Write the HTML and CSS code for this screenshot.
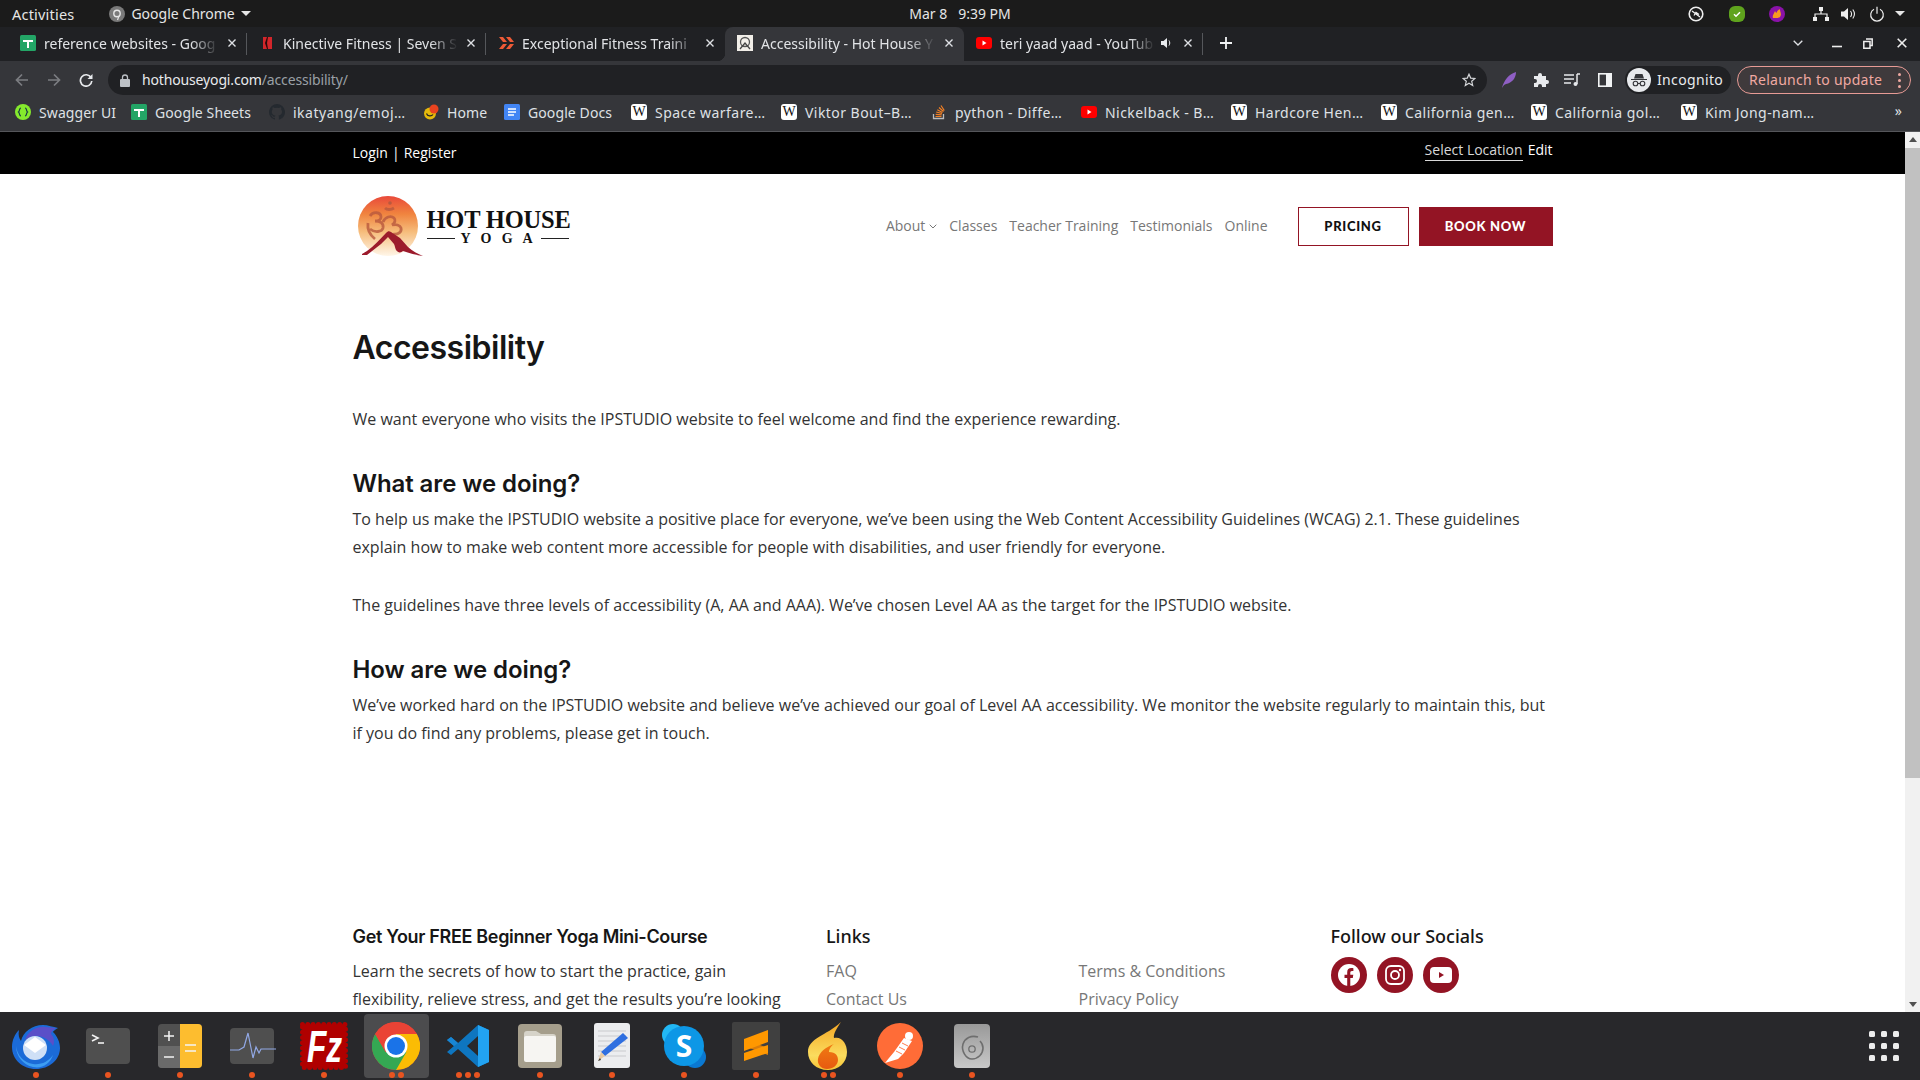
FILE: index.html
```html
<!DOCTYPE html>
<html lang="en">
<head>
<meta charset="utf-8">
<title>Accessibility - Hot House Yoga</title>
<link rel="stylesheet" href="styles.css">
</head>
<body>
<div class="screen">
  <svg class="sprite" width="0" height="0" aria-hidden="true">
    <symbol id="sheets" viewBox="0 0 16 16"><rect width="16" height="16" rx="1.5" fill="#23a566"/><path d="M3 5h10v2H9v6H7V7H3z" fill="#fff"/></symbol>
    <symbol id="yt" viewBox="0 0 16 16"><rect y="2" width="16" height="12" rx="3" fill="#f00"/><path d="M6.5 5.5l4 2.5-4 2.5z" fill="#fff"/></symbol>
    <symbol id="x" viewBox="0 0 10 10"><path d="M1.5 1.5l7 7M8.5 1.5l-7 7" stroke="#dfe1e5" stroke-width="1.4" fill="none"/></symbol>
  </svg>

  <div class="topbar">
    <div class="top-left">
      <span>Activities</span>
      <span class="app-menu">
        <svg width="16" height="16" viewBox="0 0 16 16"><circle cx="8" cy="8" r="8" fill="#7a7a7a"/><circle cx="8" cy="7.5" r="3.2" fill="none" stroke="#e6e6e6" stroke-width="1.4"/><path d="M10 10l-1.5 4" stroke="#e6e6e6" stroke-width="1.2"/></svg>
        Google Chrome <i class="caret"></i>
      </span>
    </div>
    <div class="top-clock">Mar 8&nbsp;&nbsp;&nbsp;9:39 PM</div>
    <div class="top-right">
      <svg class="tray-a" width="16" height="16" viewBox="0 0 16 16"><circle cx="8" cy="8" r="6.8" fill="none" stroke="#eee" stroke-width="1.6"/><path d="M4 5l8 6M6 9.500l2-3 3 2" fill="none" stroke="#eee" stroke-width="1.3"/></svg>
      <svg class="tray-b" width="16" height="16" viewBox="0 0 16 16"><rect width="16" height="16" rx="6" fill="#5fa31d"/><path d="M5 8.200l2 2 4-4" fill="none" stroke="#fff" stroke-width="1.5"/></svg>
      <svg class="tray-c" width="16" height="16" viewBox="0 0 16 16"><circle cx="8" cy="8" r="8" fill="#8a12a8"/><path d="M4 12c-1-3 1-4 2-7 .5 1 1 1.500 1.300 2 .5-1.500 1.700-3 3.700-4-.4 2 1.500 4 .7 6.500-.5 1.500-1.500 2.500-3 2.500H5z" fill="#f79a1f"/></svg>
      <svg class="tray-d" width="16" height="16" viewBox="0 0 16 16"><path d="M6 1h4v4H6zM0 11h4v4H0zM12 11h4v4h-4z" fill="#eee"/><path d="M8 5v3M2 11V8h12v3" fill="none" stroke="#eee" stroke-width="1.200"/></svg>
      <svg class="tray-e" width="16" height="16" viewBox="0 0 16 16"><path d="M1 5.500h3l4-3.500v12l-4-3.500H1z" fill="#eee"/><path d="M10.500 5c1.300 1.800 1.300 4.200 0 6M12.800 3.500c2 2.700 2 6.300 0 9" fill="none" stroke="#eee" stroke-width="1.100"/></svg>
      <svg class="tray-f" width="16" height="16" viewBox="0 0 16 16"><path d="M5 3.200a6.300 6.300 0 1 0 6 0M8 .8v7" fill="none" stroke="#eee" stroke-width="1.200"/></svg>
      <i class="caret caret-wide"></i>
    </div>
  </div>

  <div class="tabstrip">
    <div class="tab">
      <svg class="fav" width="16" height="16"><use href="#sheets"/></svg>
      <span class="tab-title">reference websites - Goog</span>
      <svg class="tab-x" width="10" height="10"><use href="#x"/></svg>
    </div>
    <div class="tab">
      <svg class="fav" width="16" height="16" viewBox="0 0 16 16"><rect x="4" y="2" width="9" height="12" fill="#d3262b"/><path d="M8 2L6 8l2 6h1L8 8l1-6z" fill="#2a0a0b"/></svg>
      <span class="tab-title">Kinective Fitness | Seven S</span>
      <svg class="tab-x" width="10" height="10"><use href="#x"/></svg>
    </div>
    <div class="tab">
      <svg class="fav" width="16" height="16" viewBox="0 0 16 16"><path d="M1 2h4l4 5H5zM1 14h4l4-5H5zM8 2h4l4 5h-4zM8 14h4l4-5h-4z" fill="#ee5a36"/></svg>
      <span class="tab-title">Exceptional Fitness Traini</span>
      <svg class="tab-x" width="10" height="10"><use href="#x"/></svg>
    </div>
    <div class="tab tab-active">
      <svg class="fav" width="16" height="16" viewBox="0 0 16 16"><rect width="16" height="16" fill="#f2efe9"/><circle cx="8" cy="7" r="4.500" fill="none" stroke="#555" stroke-width="1.300"/><path d="M3 14l5-6 5 6" fill="none" stroke="#444" stroke-width="1.300"/></svg>
      <span class="tab-title">Accessibility - Hot House Y</span>
      <svg class="tab-x" width="10" height="10"><use href="#x"/></svg>
    </div>
    <div class="tab tab-last">
      <svg class="fav" width="16" height="16"><use href="#yt"/></svg>
      <span class="tab-title">teri yaad yaad - YouTub</span>
      <svg class="tab-sound" width="12" height="12" viewBox="0 0 12 12"><path d="M0 4h2.500L6 1v10L2.500 8H0z" fill="#e8eaed"/><path d="M8 3.500c1 1.500 1 3.500 0 5" fill="none" stroke="#e8eaed"/></svg>
      <svg class="tab-x" width="10" height="10"><use href="#x"/></svg>
    </div>
    <svg class="tab-plus" width="12" height="12" viewBox="0 0 12 12"><path d="M6 0v12M0 6h12" stroke="#f1f3f4" stroke-width="1.800"/></svg>
    <div class="win-controls">
      <svg class="win-chev" width="10" height="6" viewBox="0 0 10 6"><path d="M.7.700L5 5l4.300-4.300" fill="none" stroke="#dfe1e5" stroke-width="1.300"/></svg>
      <svg class="win-min" width="10" height="10" viewBox="0 0 10 10"><path d="M0 8.500h10" stroke="#eee" stroke-width="1.600"/></svg>
      <svg class="win-max" width="10" height="11" viewBox="0 0 10 11"><path d="M3 1h6.200v6.500H7M.8 3.500h6.200v6.700H.8z" fill="none" stroke="#eee" stroke-width="1.500"/></svg>
      <svg class="win-close" width="10" height="10" viewBox="0 0 10 10"><path d="M.7.700l8.600 8.600M9.300.700L.7 9.300" stroke="#eee" stroke-width="1.600"/></svg>
    </div>
  </div>

  <div class="toolbar">
    <svg class="tb-back" width="14" height="14" viewBox="0 0 14 14"><path d="M13 7H2M7 1.500L1.500 7 7 12.500" fill="none" stroke="#7b7d81" stroke-width="1.700"/></svg>
    <svg class="tb-fwd" width="14" height="14" viewBox="0 0 14 14"><path d="M1 7h11M7 1.500L12.500 7 7 12.500" fill="none" stroke="#7b7d81" stroke-width="1.700"/></svg>
    <svg class="tb-reload" width="14" height="14" viewBox="0 0 14 14"><path d="M12 4.500A5.700 5.700 0 1 0 12.800 8" fill="none" stroke="#e8eaed" stroke-width="1.700"/><path d="M13.500 1v5h-5z" fill="#e8eaed"/></svg>
    <div class="omnibox">
      <svg class="lock" width="10" height="13" viewBox="0 0 10 13"><rect y="5" width="10" height="8" rx="1" fill="#bdc1c6"/><path d="M2.500 5V3.500a2.500 2.500 0 0 1 5 0V5" fill="none" stroke="#bdc1c6" stroke-width="1.300"/></svg>
      <span class="url"><span class="url-host">hothouseyogi.com</span>/accessibility/</span>
      <svg class="star" width="14" height="14" viewBox="0 0 14 14"><path d="M7 1.200l1.700 3.900 4.200.4-3.200 2.800 1 4.100L7 10.200l-3.700 2.200 1-4.100L1.100 5.500l4.200-.4z" fill="none" stroke="#d5d7da" stroke-width="1.200"/></svg>
    </div>
    <svg class="tb-feather" width="16" height="18" viewBox="0 0 16 18"><path d="M1 17C3 9 8 3 15 1c0 6-4 11-10 12l-2 1z" fill="#8f5fc4"/></svg>
    <svg class="tb-puzzle" width="16" height="16" viewBox="0 0 16 16"><path d="M1 4h4V3a2 2 0 0 1 4 0v1h4v4h1a2 2 0 0 1 0 4h-1v3H9v-1a2 2 0 0 0-4 0v1H1v-4h1a2 2 0 0 0 0-4H1z" fill="#e8eaed"/></svg>
    <svg class="tb-media" width="16" height="14" viewBox="0 0 16 14"><path d="M0 2h10M0 6h10M0 10h7" stroke="#e8eaed" stroke-width="1.500"/><path d="M13 1v10" stroke="#e8eaed" stroke-width="1.500"/><path d="M13 1h3" stroke="#e8eaed" stroke-width="1.500"/><circle cx="11.500" cy="11" r="2" fill="#e8eaed"/></svg>
    <svg class="tb-panel" width="14" height="14" viewBox="0 0 14 14"><rect x=".8" y=".8" width="12.400" height="12.400" fill="none" stroke="#f1f3f4" stroke-width="1.600"/><rect x="8" y="1" width="5" height="12" fill="#f1f3f4"/></svg>
    <div class="incognito">
      <span class="inc-badge">
        <svg width="16" height="14" viewBox="0 0 16 14"><path d="M0 6h16v1H0zM3 5.500L4.500 1h7L13 5.500z" fill="#35363a"/><circle cx="4.500" cy="10.500" r="2.300" fill="none" stroke="#35363a" stroke-width="1.100"/><circle cx="11.500" cy="10.500" r="2.300" fill="none" stroke="#35363a" stroke-width="1.100"/><path d="M6.800 10.500h2.400" stroke="#35363a"/></svg>
      </span>
      <span class="lift">Incognito</span>
    </div>
    <div class="relaunch">
      <span class="lift">Relaunch to update</span>
      <span class="kebab"><i></i><i></i><i></i></span>
    </div>
  </div>

  <div class="bookmarks">
    <div class="bm bm-1"><svg width="16" height="16" viewBox="0 0 16 16"><circle cx="8" cy="8" r="8" fill="#85ea2d"/><path d="M6 4c-2 0-1 3-2.500 4C5 9 4 12 6 12M10 4c2 0 1 3 2.500 4C11 9 12 12 10 12" fill="none" stroke="#173647" stroke-width="1.200"/></svg><span>Swagger UI</span></div>
    <div class="bm bm-2"><svg width="16" height="16"><use href="#sheets"/></svg><span>Google Sheets</span></div>
    <div class="bm bm-3"><svg width="16" height="16" viewBox="0 0 16 16"><path d="M8 0a8 8 0 0 0-2.500 15.600c.4.100.5-.2.500-.4v-1.400c-2.200.5-2.700-1-2.700-1-.4-.9-.9-1.200-.9-1.200-.7-.5.100-.5.100-.5.800.100 1.200.8 1.200.8.700 1.200 1.900.9 2.300.7.100-.5.300-.9.500-1.100-1.800-.2-3.700-.9-3.700-4 0-.9.300-1.600.8-2.100-.1-.2-.4-1 .1-2.100 0 0 .7-.2 2.200.8a7.600 7.600 0 0 1 4 0c1.500-1 2.200-.8 2.200-.8.400 1.100.2 1.900.1 2.100.5.600.8 1.300.8 2.100 0 3.100-1.900 3.800-3.700 4 .3.300.6.800.6 1.500v2.200c0 .2.100.5.600.4A8 8 0 0 0 8 0z" fill="#24292f"/></svg><span>ikatyang/emoj…</span></div>
    <div class="bm bm-4"><svg width="16" height="16" viewBox="0 0 16 16"><circle cx="7" cy="9.500" r="6" fill="#e5b90b"/><path d="M3.500 9.500c1 3 5 3 6.500 1" fill="none" stroke="#222" stroke-width="1.200"/><circle cx="11" cy="5" r="4.500" fill="#e9431f"/></svg><span>Home</span></div>
    <div class="bm bm-5"><svg width="16" height="16" viewBox="0 0 16 16"><rect width="16" height="16" rx="1.500" fill="#4285f4"/><path d="M4 5h8M4 8h8M4 11h6" stroke="#fff" stroke-width="1.400"/></svg><span>Google Docs</span></div>
    <div class="bm bm-fix"><span class="wiki">W</span><span>Space warfare…</span></div>
    <div class="bm bm-fix"><span class="wiki">W</span><span>Viktor Bout–B…</span></div>
    <div class="bm bm-fix"><svg width="16" height="16" viewBox="0 0 16 16"><path d="M2.500 10v4.500h10V10" fill="none" stroke="#bcbbbb" stroke-width="1.300"/><path d="M4.500 12.500h6M4.700 10.300l6 .5M5.200 8l5.800 1.500M6.300 5.700l5.200 2.800M8 3.500l4.500 4M10 1.500l3.300 5" stroke="#f48024" stroke-width="1.200"/></svg><span>python - Diffe…</span></div>
    <div class="bm bm-fix"><svg width="16" height="16"><use href="#yt"/></svg><span>Nickelback - B…</span></div>
    <div class="bm bm-fix"><span class="wiki">W</span><span>Hardcore Hen…</span></div>
    <div class="bm bm-fix"><span class="wiki">W</span><span>California gen…</span></div>
    <div class="bm bm-fix"><span class="wiki">W</span><span>California gol…</span></div>
    <div class="bm bm-fix"><span class="wiki">W</span><span>Kim Jong-nam…</span></div>
    <span class="bm-more">»</span>
  </div>

  <div class="page">
    <div class="site">
      <div class="utility">
        <div class="container utility-row">
          <div class="auth"><span>Login</span><span class="auth-sep">|</span><span>Register</span></div>
          <div class="loc"><span class="loc-link">Select Location</span><span class="loc-edit">Edit</span></div>
        </div>
      </div>
      <header class="container site-header">
        <div class="logo">
          <svg class="logo-mark" width="66" height="60" viewBox="0 0 66 60">
            <defs><linearGradient id="sun" x1="0" y1="0" x2="0" y2="1"><stop offset="0" stop-color="#e9493a"/><stop offset=".3" stop-color="#f0843f"/><stop offset=".6" stop-color="#f6bd7c"/><stop offset="1" stop-color="#fff6e8"/></linearGradient></defs>
            <circle cx="30" cy="30" r="30" fill="url(#sun)"/>
            <g fill="none" stroke="#b9593e" stroke-width="2.800" opacity=".8">
              <path d="M12 20c3-5 11-4 11 1 0 3-3 4-6 4 5 0 9 2 8 7-1 4-8 5-13 1"/>
              <path d="M25 26c2-5 8-7 11-4 2 2 1 5-2 7 4-1 8 0 9 3 1 4-3 7-8 6"/>
              <path d="M10 27c-1 7 2 12 7 16"/>
              <path d="M27 12c2 2 6 2 9 0"/>
            </g>
            <circle cx="32" cy="7" r="1.800" fill="#b9593e"/>
            <path d="M4 59h5l14-11 7-7 6 7c1 2 1 4 2 6 2 3 5 3 7 1 6 2 13 4 20 5-5-2-11-5-15-9l-8-9-9-6c-2-1-3-1-5 1-6 6-12 13-19 18l-5 3z" fill="#9c1b2c"/>
          </svg>
          <div class="logo-text">
            <div class="logo-hot">HOT HOUSE</div>
            <div class="logo-yoga"><i></i><span>Y O G A</span><i></i></div>
          </div>
        </div>
        <nav class="nav">
          <span class="nav-about">About <svg width="8" height="5" viewBox="0 0 8 5"><path d="M.7.700L4 4 7.300.700" fill="none" stroke="#777" stroke-width="1"/></svg></span>
          <span>Classes</span>
          <span>Teacher Training</span>
          <span>Testimonials</span>
          <span>Online</span>
        </nav>
        <div class="cta">
          <span class="btn btn-outline">PRICING</span>
          <span class="btn btn-solid">BOOK NOW</span>
        </div>
      </header>
      <main class="container content">
        <h1>Accessibility</h1>
        <p class="intro">We want everyone who visits the IPSTUDIO website to feel welcome and find the experience rewarding.</p>
        <h2>What are we doing?</h2>
        <p>To help us make the IPSTUDIO website a positive place for everyone, we’ve been using the Web Content Accessibility Guidelines (WCAG) 2.1. These guidelines explain how to make web content more accessible for people with disabilities, and user friendly for everyone.</p>
        <p class="spaced">The guidelines have three levels of accessibility (A, AA and AAA). We’ve chosen Level AA as the target for the IPSTUDIO website.</p>
        <h2 class="h2-second">How are we doing?</h2>
        <p>We’ve worked hard on the IPSTUDIO website and believe we’ve achieved our goal of Level AA accessibility. We monitor the website regularly to maintain this, but if you do find any problems, please get in touch.</p>
      </main>
      <footer class="container footer">
        <div class="f-course">
          <h3>Get Your FREE Beginner Yoga Mini-Course</h3>
          <p>Learn the secrets of how to start the practice, gain flexibility, relieve stress, and get the results you’re looking</p>
        </div>
        <div class="f-links">
          <h3 class="h3-plex">Links</h3>
          <a>FAQ</a>
          <a>Contact Us</a>
        </div>
        <div class="f-links f-links-2">
          <a>Terms &amp; Conditions</a>
          <a>Privacy Policy</a>
        </div>
        <div class="f-social">
          <h3 class="h3-plex">Follow our Socials</h3>
          <div class="social-row">
            <span class="social"><svg width="24" height="24" viewBox="0 0 24 24"><circle cx="12" cy="12" r="11" fill="#fff"/><path d="M10.200 23.500V15H7.500v-3.300h2.700V9.300c0-2.800 1.600-4.200 4-4.200 1.200 0 2.200.2 2.200.2v2.700H15c-1.300 0-1.700.8-1.700 1.700v2h3l-.5 3.300h-2.500v8.500z" fill="#931424"/></svg></span>
            <span class="social"><svg width="20" height="20" viewBox="0 0 20 20"><rect x="1" y="1" width="18" height="18" rx="5" fill="none" stroke="#fff" stroke-width="1.800"/><circle cx="10" cy="10" r="4" fill="none" stroke="#fff" stroke-width="1.800"/><circle cx="15" cy="5" r="1.200" fill="#fff"/></svg></span>
            <span class="social"><svg width="22" height="16" viewBox="0 0 22 16"><rect width="22" height="16" rx="4" fill="#fff"/><path d="M9 5l5 3-5 3z" fill="#931424"/></svg></span>
          </div>
        </div>
      </footer>
    </div>
    <div class="scrollbar">
      <i class="sb-up"></i>
      <div class="sb-thumb"></div>
      <i class="sb-down"></i>
    </div>
  </div>

  <div class="dock">
    <div class="dock-item">
      <svg width="48" height="48" viewBox="0 0 48 48"><path d="M24 47C10 47 0 37 0 25 0 18 3 12 7 8c-1 5 0 8 2 11C11 10 20 3 31 3c5 0 10 2 15 3-3 2-5 3-5 4 4 4 7 10 7 16 0 12-11 21-24 21z" fill="#1b6bd8"/><path d="M13 18c3-9 12-14 20-13l11 1c-3 2-5 4-5 6 3 3 4 8 2 12-3-6-10-10-17-10-4 0-8 2-11 4z" fill="#5a4fc8"/><path d="M4 24c1 9 8 17 17 18 8 1 15-2 20-9-3 9-11 14-20 12C11 43 4 34 4 24z" fill="#3d9df2"/><circle cx="23" cy="26" r="12" fill="#cfe0f6"/><path d="M12 23l11-8 11 8-11 8z" fill="#fff"/></svg>
      <div class="dots"><i></i></div>
    </div>
    <div class="dock-item">
      <svg width="48" height="48" viewBox="0 0 48 48"><rect x="2" y="6" width="44" height="36" rx="4" fill="#4f4f4f"/><path d="M8 13l6 3-6 3" fill="none" stroke="#f2f2f2" stroke-width="1.600"/><path d="M14 21h6" stroke="#f2f2f2" stroke-width="1.600"/></svg>
      <div class="dots"><i></i></div>
    </div>
    <div class="dock-item">
      <svg width="48" height="48" viewBox="0 0 48 48"><rect x="2" y="2" width="44" height="44" rx="4" fill="#505050"/><path d="M2 24h22v22H6a4 4 0 0 1-4-4z" fill="#6a6a6a"/><path d="M24 2h18a4 4 0 0 1 4 4v36a4 4 0 0 1-4 4H24z" fill="#fdbd2f"/><path d="M13 9v10M8 14h10M8 35h10M29 23h11M29 29h11" stroke="#f4f4f4" stroke-width="1.500"/></svg>
      <div class="dots"><i></i></div>
    </div>
    <div class="dock-item">
      <svg width="48" height="48" viewBox="0 0 48 48"><rect x="2" y="6" width="44" height="36" rx="4" fill="#4f4f4f"/><path d="M2 28h9l5-3 4-14 5 25 3-11 3 6 2-4h17" fill="none" stroke="#92a9e6" stroke-width="1.200"/></svg>
      <div class="dots"><i></i></div>
    </div>
    <div class="dock-item">
      <svg width="48" height="48" viewBox="0 0 48 48"><rect x="2.500" y="2.500" width="43" height="43" fill="#b00000" stroke="#b00000" stroke-width="5" stroke-linecap="round" stroke-dasharray="0 5.300"/><rect x="2.500" y="2.500" width="43" height="43" fill="#b00000"/><text class="fz" transform="translate(24.5 40) scale(.72 1)" text-anchor="middle">Fz</text></svg>
      <div class="dots"><i></i></div>
    </div>
    <div class="dock-item dock-active">
      <svg width="48" height="48" viewBox="0 0 48 48"><circle cx="24" cy="24" r="24" fill="#ea4335"/><path d="M24 48a24 24 0 0 0 20.800-36H24z" fill="#fbbc04"/><path d="M3.200 12A24 24 0 0 0 24 48l10.400-18H24l-10.400 0z" fill="#34a853"/><path d="M3.200 12L13.600 30 24 12h20.800A24 24 0 0 0 3.200 12z" fill="#ea4335"/><circle cx="24" cy="24" r="11.500" fill="#fff"/><circle cx="24" cy="24" r="9" fill="#1a73e8"/></svg>
      <div class="dots"><i></i><i></i></div>
    </div>
    <div class="dock-item">
      <svg width="48" height="48" viewBox="0 0 48 48"><path d="M34 3L14 21l-7-6-4 3 7 6-7 6 4 3 7-6 20 18 11-5V8z" fill="#0e76c0"/><path d="M34 3L14 21l-7-6-4 3 7 6 4-3z" fill="#1886d4"/><path d="M34 14L23 24l11 10z" fill="#29292b"/><path d="M34 3l11 5v32l-11 5z" fill="#22a3f2"/></svg>
      <div class="dots"><i></i><i></i><i></i></div>
    </div>
    <div class="dock-item">
      <svg width="48" height="48" viewBox="0 0 48 48"><rect x="2" y="2" width="44" height="44" rx="4" fill="#a59e8c"/><path d="M8 12a3 3 0 0 1 3-3h9l5 3h12a3 3 0 0 1 3 3v5H8z" fill="#d6d3c9"/><rect x="8" y="14" width="32" height="26" rx="2" fill="#f6f5f2"/></svg>
      <div class="dots"><i></i></div>
    </div>
    <div class="dock-item">
      <svg width="48" height="48" viewBox="0 0 48 48"><rect x="6" y="1" width="36" height="45" rx="3" fill="#ecedef"/><path d="M10 9h28M10 14h28M10 19h28M10 24h28M10 29h28M10 34h28" stroke="#c9cacd"/><path d="M35 11l5 5-23 18-4-4z" fill="#2f6fe0"/><path d="M13 30l4 4-7 5z" fill="#e8c9a0"/><path d="M12 36l-2 3 3-1z" fill="#333"/></svg>
      <div class="dots"><i></i></div>
    </div>
    <div class="dock-item">
      <svg width="48" height="48" viewBox="0 0 48 48"><circle cx="13" cy="13" r="11" fill="#22b8f5"/><circle cx="35" cy="35" r="11" fill="#0a78d1"/><circle cx="24" cy="24" r="20" fill="#0d97e6"/><text class="sk" x="24" y="35" text-anchor="middle">S</text></svg>
      <div class="dots"><i></i></div>
    </div>
    <div class="dock-item">
      <svg width="48" height="48" viewBox="0 0 48 48"><rect width="48" height="48" rx="2" fill="#404040"/><path d="M12 17l24 9v7L12 24z" fill="#d97c0a"/><path d="M12 17l24-9v12L12 29z" fill="#ff9800"/><path d="M12 31l24-8v8l-24 8z" fill="#ff9800"/></svg>
      <div class="dots"><i></i></div>
    </div>
    <div class="dock-item">
      <svg width="48" height="48" viewBox="0 0 48 48"><defs><linearGradient id="flame" x1="0" y1="0" x2="0" y2="1"><stop offset="0" stop-color="#f5a623"/><stop offset=".7" stop-color="#fbdc5e"/><stop offset="1" stop-color="#f7c334"/></linearGradient><linearGradient id="flame2" x1="0" y1="0" x2="0" y2="1"><stop offset="0" stop-color="#f07b12"/><stop offset="1" stop-color="#e75a10"/></linearGradient></defs><path d="M37 0c-4 6-8 12-7 16 8-2 13 6 13 14 0 11-9 18-19 18C12 48 4 40 4 30 4 16 22 14 37 0z" fill="url(#flame)"/><path d="M30 22c-4 3-5 6-5 8 7 0 9 4 9 8 0 5-5 9-11 9-6 0-10-5-9-10 1-7 8-12 16-15z" fill="url(#flame2)"/></svg>
      <div class="dots"><i></i><i></i></div>
    </div>
    <div class="dock-item">
      <svg width="48" height="48" viewBox="0 0 48 48"><circle cx="24" cy="24" r="23" fill="#ff6c37"/><circle cx="33" cy="14" r="4" fill="#fff"/><path d="M36 19l-8-3-10 14-5 6-4 5 13-4 6-6z" fill="#fff"/><path d="M20 29l6 3M23 25l6 3M26 21l6 3" stroke="#ff6c37" stroke-width=".9"/></svg>
      <div class="dots"><i></i></div>
    </div>
    <div class="dock-item">
      <svg width="48" height="48" viewBox="0 0 48 48"><defs><linearGradient id="disk" x1="0" y1="0" x2="0" y2="1"><stop offset="0" stop-color="#999"/><stop offset="1" stop-color="#c8c8c8"/></linearGradient></defs><rect x="6" y="2" width="36" height="44" rx="4" fill="url(#disk)"/><circle cx="24" cy="27" r="3.200" fill="none" stroke="#6e6e6e" stroke-width="1.300"/><path d="M30 15c-7-2-13 1-15 7-2 7 3 15 9 15 6 0 11-5 11-11 0-3-1-5-3-7" fill="none" stroke="#6e6e6e" stroke-width="1.600"/></svg>
      <div class="dots"><i></i></div>
    </div>
    <div class="app-grid"><i></i><i></i><i></i><i></i><i></i><i></i><i></i><i></i><i></i></div>
  </div>
</div>
</body>
</html>
```

FILE: styles.css
```css
* { box-sizing: border-box; }
html, body { margin: 0; padding: 0; height: 100%; overflow: hidden; }
body { font-family: "Open Sans", "Noto Sans", sans-serif; color: #222; }
i { display: block; font-style: normal; }
.sprite { position: absolute; }

.screen { width: 1920px; height: 1080px; display: flex; flex-direction: column; overflow: hidden; }

/* GNOME top bar */
.topbar { height: 27px; background: #1b1b1b; color: #e6e6e6; font-family: "Noto Sans", sans-serif; font-size: 14px; display: grid; grid-template-columns: 1fr auto 1fr; align-items: center; flex: none; }
.top-left { display: flex; align-items: center; gap: 35px; padding-left: 12px; }
.top-left > span:first-child { font-size: 14.500px; letter-spacing: .2px; }
.app-menu { display: flex; align-items: center; gap: 6px; }
.caret { width: 0; height: 0; border-left: 5px solid transparent; border-right: 5px solid transparent; border-top: 5px solid #e6e6e6; }
.top-right { display: flex; align-items: center; justify-content: flex-end; position: relative; height: 27px; }
.tray-a { margin-right: 25px; }
.tray-b { margin-right: 24px; }
.tray-c { margin-right: 28px; }
.tray-d { margin-right: 11px; }
.tray-e { margin-right: 13px; }
.tray-f { margin-right: 10px; }
.caret-wide { margin-right: 15px; }

/* Tabs */
.tabstrip { height: 34px; background: #202124; display: flex; align-items: stretch; padding-left: 8px; flex: none; }
.tab { width: 239px; display: flex; align-items: center; padding: 0 10px 2px 12px; position: relative; color: #e1e3e6; font-family: "Noto Sans", sans-serif; font-size: 14px; }
.tab::after { content: ""; position: absolute; right: 0; top: 6px; bottom: 6px; width: 1px; background: #55575b; }
.tab:nth-child(3)::after, .tab-active::after { display: none; }
.tab-active { background: #35363a; border-radius: 8px 8px 0 0; }
.tab-active::before { content: ""; position: absolute; left: -8px; bottom: 0; width: 8px; height: 8px; background: radial-gradient(circle at 0 0, transparent 8px, #35363a 8.500px); }
.fav { flex: none; margin-right: 8px; }
.tab-title { flex: 1; min-width: 0; white-space: nowrap; overflow: hidden; -webkit-mask-image: linear-gradient(90deg, #000 84%, transparent 100%); mask-image: linear-gradient(90deg, #000 84%, transparent 100%); }
.tab-x { flex: none; margin-left: 8px; }
.tab-sound { flex: none; margin-left: 6px; margin-right: 2px; }
.tab-plus { align-self: center; margin-left: 17px; margin-bottom: 2px; }
.win-controls { margin-left: auto; display: flex; align-items: center; padding-right: 13px; padding-bottom: 2px; }
.win-chev { margin-right: 29px; }
.win-min { margin-right: 21px; }
.win-max { margin-right: 24px; }

/* Toolbar */
.toolbar { height: 35px; background: #35363a; display: flex; align-items: center; padding: 3px 9px 0 15px; flex: none; }
.tb-fwd { margin-left: 18px; }
.tb-reload { margin-left: 18px; }
.omnibox { margin-left: 15px; width: 1379px; height: 30px; border-radius: 15px; background: #202124; display: flex; align-items: center; padding-left: 12px; padding-right: 11px; }
.lock { flex: none; margin-right: 12px; }
.url { font-family: "Noto Sans", sans-serif; font-size: 14px; color: #9aa0a6; flex: 1; letter-spacing: -.15px; margin-bottom: 2px; }
.url-host { color: #e8eaed; }
.lift { margin-bottom: 2px; }
.tb-feather { margin-left: 14px; }
.tb-puzzle { margin-left: 16px; }
.tb-media { margin-left: 15px; }
.tb-panel { margin-left: 18px; }
.incognito { margin-left: 13px; width: 106px; height: 28px; border-radius: 14px; background: #202124; display: flex; align-items: center; gap: 6px; padding-left: 1px; color: #e8eaed; font-family: "Noto Sans", sans-serif; font-size: 14px; letter-spacing: .35px; }
.inc-badge { width: 24px; height: 24px; margin-left: 1px; border-radius: 50%; background: #e8eaed; display: flex; align-items: center; justify-content: center; }
.relaunch { margin-left: 6px; width: 174px; height: 28px; border: 1px solid #e79b95; border-radius: 14px; display: flex; align-items: center; justify-content: space-between; padding: 0 9px 0 11px; color: #f0a9a2; font-family: "Noto Sans", sans-serif; font-size: 14px; letter-spacing: .28px; background: #3f3a3c; }
.kebab { display: flex; flex-direction: column; gap: 3px; }
.kebab i { width: 3px; height: 3px; border-radius: 50%; background: #f0a9a2; }

/* Bookmarks */
.bookmarks { height: 36px; background: #35363a; border-bottom: 1px solid #55565a; display: flex; align-items: center; padding: 0 0 3px 15px; color: #dfe1e5; font-family: "Noto Sans", sans-serif; font-size: 14px; letter-spacing: .1px; flex: none; position: relative; }
.bm { display: flex; align-items: center; gap: 8px; white-space: nowrap; flex: none; }
.bm svg { flex: none; }
.bm-1 { width: 116px; }
.bm-2 { width: 138px; }
.bm-3 { width: 154px; letter-spacing: .5px; }
.bm-4 { width: 81px; }
.bm-5 { width: 127px; }
.bm-fix { width: 150px; letter-spacing: .45px; }
.wiki { flex: none; width: 16px; height: 16px; border-radius: 3px; background: #fff; color: #111; font-family: "Liberation Serif", serif; font-size: 14px; line-height: 16px; text-align: center; letter-spacing: 0; }
.bm-more { position: absolute; right: 18px; top: 6px; font-size: 14px; line-height: 18px; }

/* Browser page */
.page { flex: 1; min-height: 0; display: flex; background: #fff; }
.site { flex: 1; min-width: 0; overflow: hidden; }
.container { width: 1200px; margin-left: auto; margin-right: auto; }
.scrollbar { width: 15px; background: #f1f1f1; display: flex; flex-direction: column; align-items: center; }
.sb-up { width: 0; height: 0; margin-top: 5px; border-left: 4px solid transparent; border-right: 4px solid transparent; border-bottom: 5px solid #505050; }
.sb-thumb { width: 15px; height: 630px; margin-top: 6px; background: #c1c1c1; }
.sb-down { width: 0; height: 0; margin-top: auto; margin-bottom: 5px; border-left: 4px solid transparent; border-right: 4px solid transparent; border-top: 5px solid #505050; }

.utility { background: #000; height: 42px; color: #fff; font-size: 14px; }
.utility-row { display: flex; justify-content: space-between; height: 42px; }
.auth { display: flex; gap: 4px; padding-top: 11px; line-height: 20px; }
.loc { display: flex; gap: 5px; padding-top: 8px; line-height: 20px; }
.loc-link { color: #d8d8d8; border-bottom: 1px solid #d8d8d8; height: 21px; }

.site-header { display: flex; align-items: center; padding-top: 22px; }
.logo { display: flex; align-items: flex-start; margin-left: 5px; margin-right: auto; }
.logo-mark { display: block; }
.logo-text { margin-left: 3px; padding-top: 12px; width: 142px; font-family: "Liberation Serif", serif; font-weight: 700; color: #111; }
.logo-hot { font-size: 24.500px; line-height: 24px; white-space: nowrap; letter-spacing: -.2px; }
.logo-yoga { display: flex; align-items: center; justify-content: space-between; font-size: 14px; line-height: 13px; }
.logo-yoga i { width: 28px; height: 1px; background: #222; }
.logo-yoga span { word-spacing: 3px; letter-spacing: 2px; }
.nav { display: flex; gap: 12px; font-size: 14px; color: #777; margin-right: 30px; margin-bottom: 2px; }
.nav-about { display: flex; align-items: center; gap: 4px; }
.nav-about svg { margin-top: 3px; }
.cta { display: flex; gap: 10px; }
.btn { height: 39px; display: flex; align-items: center; justify-content: center; font-family: "Lato", sans-serif; font-weight: 900; font-size: 13px; letter-spacing: .7px; }
.btn-outline { width: 111px; border: 1px solid #931424; color: #111; }
.btn-solid { width: 134px; background: #931424; color: #fff; }

.content { padding-top: 72px; font-size: 16px; line-height: 28px; color: #333; }
h1, h2, h3 { margin: 0; font-family: "Inter", "Lato", sans-serif; color: #161616; }
h1 { font-size: 32px; line-height: 40px; font-weight: 600; letter-spacing: -.5px; }
h2 { font-size: 24px; line-height: 30px; font-weight: 600; letter-spacing: -.08px; margin-top: 36px; margin-bottom: 6px; }
.content p { margin: 0; }
.content .intro { margin-top: 37px; }
.content .spaced { margin-top: 30px; }
.h2-second { margin-top: 36px; margin-bottom: 6px; }

.footer { display: grid; grid-template-columns: 473.500px 252.500px 252px 222px; margin-top: 178px; font-size: 16px; line-height: 28px; }
.footer h3 { font-size: 18px; line-height: 24px; font-weight: 600; letter-spacing: -.33px; margin-bottom: 8px; white-space: nowrap; }
.footer .h3-plex { font-family: "Noto Sans", sans-serif; font-weight: 500; letter-spacing: 0; margin-top: -1px; margin-bottom: 9px; }
.f-course p { margin: 0; width: 445px; color: #333; }
.f-links { display: flex; flex-direction: column; color: #777; }
.f-links-2 { padding-top: 32px; }
.social-row { display: flex; gap: 10px; }
.social { width: 36px; height: 36px; border-radius: 50%; background: #931424; display: flex; align-items: center; justify-content: center; overflow: hidden; }

/* Dock */
.dock { height: 68px; flex: none; background: #28282b; display: flex; align-items: flex-start; }
.dock-item { width: 65px; height: 64px; margin: 2px 3.500px; border-radius: 4px; padding-top: 8px; display: flex; flex-direction: column; align-items: center; }
.dock-item svg { display: block; }
.dock-active { background: #4c4c4e; }
.dots { display: flex; gap: 3px; margin-top: 2px; }
.dots i { width: 6px; height: 6px; border-radius: 50%; background: #e95420; }
.app-grid { margin-left: auto; margin-right: 21px; margin-top: 19px; display: grid; grid-template-columns: repeat(3, 6px); grid-auto-rows: 6px; gap: 6px; }
.app-grid i { background: #ececec; border-radius: 1.500px; }
.fz { font-family: "Liberation Sans", sans-serif; font-style: italic; font-weight: 700; font-size: 44px; fill: #fff; }
.sk { font-family: "Open Sans", sans-serif; font-weight: 700; font-size: 30px; fill: #fff; }
```
